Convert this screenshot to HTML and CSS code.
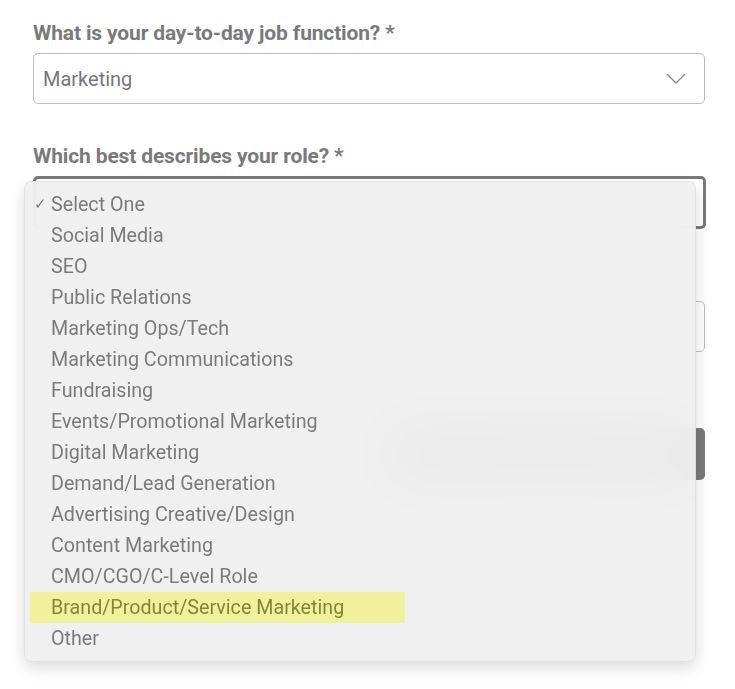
FILE: index.html
```html
<!DOCTYPE html>
<html lang="en">
<head>
    <meta charset="UTF-8">
    <title>Role Survey</title>
    <link rel="stylesheet" href="styles.css">
</head>
<body>

<div class="form">
    <div class="field">
        <label class="label">What is your day-to-day job function? *</label>
        <div class="select">
            <span>Marketing</span>
            <svg class="chevron" width="20" height="11" viewBox="0 0 20 11">
                <polyline points="1,1 10,10 19,1" fill="none" stroke="#8a8a8a" stroke-width="1.4"/>
            </svg>
        </div>
    </div>

    <div class="field">
        <label class="label">Which best describes your role? *</label>
        <div class="select select-open"></div>
    </div>

    <div class="field">
        <label class="label">&nbsp;</label>
        <div class="select"></div>
    </div>

    <div class="actions">
        <button class="btn">Submit</button>
    </div>

    <ul class="menu">
        <li class="item"><span class="check">&#10003;</span>Select One</li>
        <li class="item">Social Media</li>
        <li class="item">SEO</li>
        <li class="item">Public Relations</li>
        <li class="item">Marketing Ops/Tech</li>
        <li class="item">Marketing Communications</li>
        <li class="item">Fundraising</li>
        <li class="item">Events/Promotional Marketing</li>
        <li class="item">Digital Marketing</li>
        <li class="item">Demand/Lead Generation</li>
        <li class="item">Advertising Creative/Design</li>
        <li class="item">Content Marketing</li>
        <li class="item">CMO/CGO/C-Level Role</li>
        <li class="item item-marked"><span class="mark">Brand/Product/Service Marketing</span></li>
        <li class="item">Other</li>
    </ul>
</div>

</body>
</html>
```

FILE: styles.css
```css
body {
    margin: 0;
    background: #fff;
    font-family: Roboto, "Liberation Sans", sans-serif;
    color: #777;
}
.form {
    position: relative;
    width: 672px;
    min-height: 668px;
    padding: 21px 0 0 33px;
}
.field {
    margin-bottom: 40px;
}
.label {
    display: block;
    font-size: 21px;
    font-weight: 700;
    line-height: 24px;
    letter-spacing: -0.15px;
    color: #7a7a7a;
    margin-bottom: 8px;
}
.select {
    box-sizing: border-box;
    height: 51px;
    border: 1px solid #bdbdbd;
    border-radius: 5px;
    display: flex;
    align-items: center;
    justify-content: space-between;
    padding: 0 18px 0 9px;
    font-size: 20px;
    color: #777;
}
.select-open {
    height: 53px;
    border: 3px solid #7a7a7a;
    width: 673px;
}
.chevron {
    display: block;
}
.actions {
    display: flex;
    justify-content: flex-end;
    margin-top: 76px;
}
.btn {
    width: 320px;
    height: 52px;
    border: none;
    border-radius: 5px;
    background: #7a7a7a;
    color: #fff;
    font-size: 18px;
}
.menu {
    position: absolute;
    left: 24px;
    top: 181px;
    width: 672px;
    box-sizing: border-box;
    margin: 0;
    padding: 7px 0 7px;
    list-style: none;
    background: rgba(239, 239, 239, 0.95);
    backdrop-filter: blur(30px);
    border: 1px solid rgba(0, 0, 0, 0.06);
    border-radius: 7px;
    box-shadow: 0 6px 16px rgba(0, 0, 0, 0.14);
}
.item {
    position: relative;
    height: 31px;
    line-height: 31px;
    padding-left: 26px;
    font-size: 19.7px;
    color: #7b7b7b;
}
.check {
    position: absolute;
    left: 9px;
    font-size: 15px;
}
.item-marked {
    padding-left: 5px;
}
.mark {
    display: block;
    width: 354px;
    padding-left: 21px;
    background: #f1f19c;
    color: #85853a;
}
```
